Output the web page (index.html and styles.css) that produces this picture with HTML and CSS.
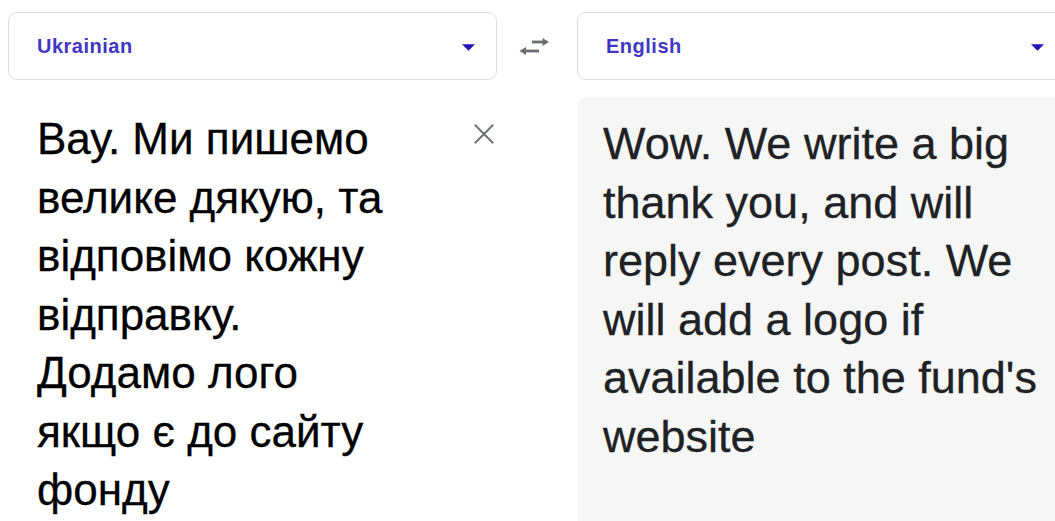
FILE: index.html
```html
<!DOCTYPE html>
<html lang="en">
<head>
<meta charset="utf-8">
<title>Translate</title>
<link rel="stylesheet" href="styles.css">
</head>
<body>
<main class="translator">
  <div class="lang-select">
    <span class="lang-name">Ukrainian</span>
    <svg class="caret" viewBox="0 0 14 7" aria-hidden="true"><path d="M0 0h14L7 7z"/></svg>
  </div>
  <div class="swap">
    <svg viewBox="0 0 32 20" aria-hidden="true">
      <rect x="14" y="4.6" width="12" height="2.8"/>
      <path d="M24.5 2L31 6l-6.5 4z"/>
      <path d="M1.5 15L8 11v8z"/>
      <rect x="7" y="13.6" width="14" height="2.8"/>
    </svg>
  </div>
  <div class="lang-select">
    <span class="lang-name">English</span>
    <svg class="caret" viewBox="0 0 14 7" aria-hidden="true"><path d="M0 0h14L7 7z"/></svg>
  </div>

  <section class="panel source">
    <p class="source-text" lang="uk">Вау. Ми пишемо велике дякую, та відповімо кожну відправку. Додамо лого якщо є до сайту фонду</p>
    <svg class="clear" viewBox="0 0 24 24" aria-hidden="true"><path d="M2 2L22 22M22 2L2 22"/></svg>
  </section>
  <div class="gutter"></div>
  <section class="panel target">
    <p class="target-text">Wow. We write a big thank you, and will reply every post. We will add a logo if available to the fund's website</p>
  </section>
</main>
</body>
</html>
```

FILE: styles.css
```css
html, body {
  margin: 0;
  background: #fff;
  overflow: hidden;
}

.translator {
  display: grid;
  grid-template-columns: 489px 80px 489px;
  grid-template-rows: 68px auto;
  row-gap: 17px;
  padding: 12px 0 0 8px;
  width: 1066px;
  font-family: "Liberation Sans", Arial, sans-serif;
}

/* language pickers */
.lang-select {
  display: flex;
  align-items: center;
  justify-content: space-between;
  border: 1px solid #dcdde2;
  border-radius: 9px;
  padding: 0 21px 0 28px;
  background: #fff;
}

.lang-name {
  font-size: 20px;
  font-weight: 700;
  color: #4036c4;
  letter-spacing: 0.5px;
}

.caret {
  width: 13px;
  height: 7px;
  fill: #2414b4;
  margin-top: 2px;
}

.swap {
  display: flex;
  align-items: center;
  justify-content: center;
  padding-right: 6px;
}

.swap svg {
  width: 32px;
  height: 20px;
  fill: #6a6d72;
}

/* text panels */
.panel {
  min-height: 424px;
}

.source {
  display: flex;
  justify-content: space-between;
  align-items: flex-start;
  padding: 13px 0 0 29px;
}

.source-text {
  margin: 0;
  width: 365px;
  font-size: 44px;
  line-height: 58.5px;
  color: #000;
  -webkit-text-stroke: 0.3px #000;
}

.clear {
  width: 22px;
  height: 22px;
  margin: 13px 2px 0 0;
  stroke: #6f7276;
  stroke-width: 2.2;
  fill: none;
}

.target {
  background: #f6f6f6;
  border-radius: 9px 0 0 0;
  padding: 18px 0 0 26px;
}

.target-text {
  margin: 0;
  width: 455px;
  font-size: 45px;
  line-height: 58.5px;
  color: #202124;
  -webkit-text-stroke: 0.3px #202124;
}
```
